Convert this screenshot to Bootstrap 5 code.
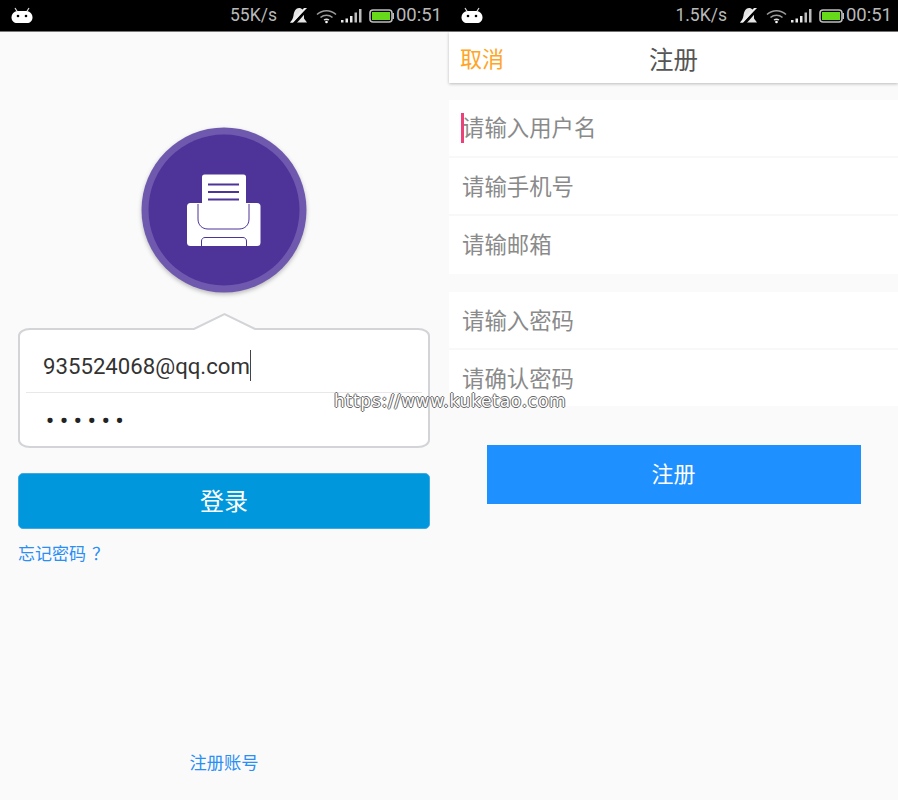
<!doctype html>
<html lang="zh">
<head>
<meta charset="utf-8">
<title>登录与注册</title>
<link rel="stylesheet" href="https://cdn.jsdelivr.net/npm/bootstrap@5.3.0/dist/css/bootstrap.min.css">
<style>
html,body{margin:0;height:800px;overflow:hidden;background:#fafafa}
body{font-family:"Roboto","Noto Sans CJK SC",sans-serif;position:relative}
.stage{width:898px;height:800px}
.phone{width:449px;height:800px;background:#fafafa}
.sbar{height:32px;background:#000;border-bottom:1px solid #777;color:#b9b9b9;padding:0 7px 0 11px;flex:none}
.sbar-right{padding:0 6px 0 12px}
.sbar .speed{font-size:17.5px;line-height:31px;margin-right:12px}
.sbar .clock{font-size:18.5px;line-height:31px;margin-left:2px}
.sico{display:block;flex:none}
.gap-batt{margin-left:7px}
.logo-wrap{padding:95px 0 0 141px;height:296px;flex:none;box-sizing:border-box}
.logo-svg{display:block;filter:drop-shadow(0 2px 2px rgba(0,0,0,.25))}
.login-box{position:relative;width:412px;height:120px;margin-left:18px;background:#fff;border:2px solid #d2d4d8;border-radius:12px/8px;padding:0 6px}
.notch{position:absolute;left:173px;top:-18px}
.login-row{height:63px;font-size:22.2px;line-height:72px;color:#333;padding-left:17px;border-bottom:1px solid #e8e8e8}
.login-row.pw{border:0;height:54px;line-height:56px;letter-spacing:6px;font-size:22px;font-weight:700;padding-left:20px;color:#222}
.caret-bar{display:inline-block;width:1px;height:31px;background:#444;vertical-align:-7px}
.login-btn{display:block;width:412px;height:56px;margin:25px 0 0 18px;background:#0097dd;border:1px solid #3fa9e3;border-radius:5px;color:#fff;font-size:24px;padding:1px 0 0;line-height:52px}
.forgot{display:block;margin:13px 0 0 18px;font-size:17px;line-height:24px;color:#2a8ef5;text-decoration:none}
.forgot span{margin-left:6px}
.signup-link{display:block;width:448px;margin-top:185px;text-align:center;font-size:17.3px;line-height:24px;color:#2a8ef5;text-decoration:none}
.navrow{height:51px;background:#fff;box-shadow:0 1px 3px rgba(0,0,0,.25);flex:none;position:relative;padding-left:11px}
.nav-cancel{font-size:22px;color:#ffa526;text-decoration:none;line-height:55px}
.nav-title{font-size:24.500px;color:#555;line-height:57px;left:0;right:0;top:0;position:absolute;text-align:center}
.field-list{margin-top:17px;border-radius:0}
.field-list + .field-list{margin-top:18px}
.field-item{height:58px;padding:0 0 0 13px;border:0;border-bottom:2px solid #f8f8f8;font-size:22.4px;line-height:58px;color:#8a8a8a;background:#fff;position:relative}
.field-item:first-child{line-height:57px}
.field-list + .field-list .field-item:first-child{line-height:58px}
.field-item:last-child{border-bottom:0}
.field-list + .field-list .field-item:last-child{height:56px}
.pink-caret{position:absolute;left:12px;top:13px;width:3px;height:30px;background:#ec407a}
.reg-btn{display:block;width:374px;height:59px;margin:39px 0 0 37.500px;background:#1e90ff;border:0;border-radius:0;color:#fff;font-size:22px;padding:0}
.watermark{position:absolute;left:334px;top:389px;font-family:"DejaVu Sans",sans-serif;font-size:17px;line-height:24px;color:#fff;letter-spacing:.75px;white-space:nowrap;text-shadow:1px 0 0 #666,-1px 0 0 #666,0 1px 0 #666,0 -1px 0 #666}
</style>
</head>
<body>
<div class="stage d-flex">
  <section class="phone d-flex flex-column">
    <div class="sbar d-flex align-items-center">
      <svg class="sico" width="22" height="18" viewBox="0 0 22 18"><path d="M4 1l2.500 4M18 1l-2.500 4" stroke="#ddd" stroke-width="1.200"/><path d="M7 4h8c4 0 6.500 3 6.500 6.500S19 16 16 16H6c-3 0-5.500-2-5.500-5.500S3 4 7 4z" fill="#fff"/><circle cx="7" cy="9" r="1.300" fill="#000"/><circle cx="15" cy="9" r="1.300" fill="#000"/></svg>
      <div class="flex-grow-1"></div>
      <span class="speed">55K/s</span>
      <svg class="sico me-2" width="19" height="18" viewBox="0 0 19 18"><path d="M10 1c3 0 5 2.500 5 5.500v5l3 4H1c2-2 3-4 3.500-7C5 4 7 1 10 1z" fill="#e4e4e4"/><path d="M4 18L19 1" stroke="#000" stroke-width="3"/><path d="M1 15.500L15 1h3L4 15.500z" fill="#efefef"/></svg>
      <svg class="sico" width="21" height="16" viewBox="0 0 21 16"><g fill="none" stroke="#9a9a9a" stroke-width="1.600"><path d="M1 6.500c5.500-5 13.500-5 19 0"/><path d="M4.500 9.500c3.500-3 8.500-3 12 0"/></g><path d="M8 12c1.500-1 3.500-1 5 0" stroke="#ddd" stroke-width="1.500" fill="none"/><circle cx="10.500" cy="14" r="1.300" fill="#fff"/></svg>
      <svg class="sico ms-1" width="21" height="15" viewBox="0 0 21 15"><g fill="#e8e8e8"><rect x="0" y="12" width="2.500" height="2.500"/><rect x="4.500" y="10.500" width="2.500" height="4"/><rect x="9" y="8" width="2.500" height="6.500"/></g><g fill="#bbb"><rect x="13.500" y="4.500" width="2.500" height="10"/><rect x="18" y="1" width="2.500" height="13.500"/></g></svg>
      <svg class="sico gap-batt" width="25" height="14" viewBox="0 0 25 14"><rect x="1" y="1" width="22" height="12" rx="3" fill="none" stroke="#bdbdbd" stroke-width="1.600"/><rect x="3" y="3" width="18" height="8" fill="#66d91a"/><rect x="23.500" y="4" width="1.500" height="6" fill="#bdbdbd"/></svg>
      <span class="clock">00:51</span>
    </div>
    <div class="logo-wrap">
      <svg class="logo-svg" width="166" height="166" viewBox="141 127 166 166">
        <circle cx="224" cy="210" r="82.500" fill="#6f59ae"/>
        <circle cx="224" cy="210" r="75.500" fill="#4e3399"/>
        <rect x="187" y="203" width="73.500" height="43" rx="3.500" fill="#fff"/>
        <path d="M198 204v15c0 6 4 10 10 10h31c6 0 10-4 10-10v-15" fill="none" stroke="#4e3399" stroke-width="1"/>
        <path d="M201.500 246v-5c0-2 1.500-3.500 3.500-3.500h38c2 0 3.500 1.500 3.500 3.500v5" fill="none" stroke="#4e3399" stroke-width="1"/>
        <rect x="202" y="174.500" width="44" height="36" rx="2.500" fill="#fff"/>
        <path d="M208 184.500h31M208 192h31M208 199.500h31" stroke="#4e3399" stroke-width="1.800"/>
      </svg>
    </div>
    <div class="login-box">
      <svg class="notch" width="64" height="20" viewBox="0 0 64 20"><path d="M1 16.500L31.500 1.500 62 16.500V20H1z" fill="#fff"/><path d="M0 17h1L31.500 2 62 17h1" fill="none" stroke="#d2d4d8" stroke-width="2"/></svg>
      <div class="login-row">935524068@qq.com<span class="caret-bar"></span></div>
      <div class="login-row pw">••••••</div>
    </div>
    <button type="button" class="btn login-btn">登录</button>
    <a class="forgot" href="#">忘记密码<span>？</span></a>
    <a class="signup-link" href="#">注册账号</a>
  </section>
  <section class="phone d-flex flex-column">
    <div class="sbar sbar-right d-flex align-items-center">
      <svg class="sico" width="22" height="18" viewBox="0 0 22 18"><path d="M4 1l2.500 4M18 1l-2.500 4" stroke="#ddd" stroke-width="1.200"/><path d="M7 4h8c4 0 6.500 3 6.500 6.500S19 16 16 16H6c-3 0-5.500-2-5.500-5.500S3 4 7 4z" fill="#fff"/><circle cx="7" cy="9" r="1.300" fill="#000"/><circle cx="15" cy="9" r="1.300" fill="#000"/></svg>
      <div class="flex-grow-1"></div>
      <span class="speed">1.5K/s</span>
      <svg class="sico me-2" width="19" height="18" viewBox="0 0 19 18"><path d="M10 1c3 0 5 2.500 5 5.500v5l3 4H1c2-2 3-4 3.500-7C5 4 7 1 10 1z" fill="#e4e4e4"/><path d="M4 18L19 1" stroke="#000" stroke-width="3"/><path d="M1 15.500L15 1h3L4 15.500z" fill="#efefef"/></svg>
      <svg class="sico" width="21" height="16" viewBox="0 0 21 16"><g fill="none" stroke="#9a9a9a" stroke-width="1.600"><path d="M1 6.500c5.500-5 13.500-5 19 0"/><path d="M4.500 9.500c3.500-3 8.500-3 12 0"/></g><path d="M8 12c1.500-1 3.500-1 5 0" stroke="#ddd" stroke-width="1.500" fill="none"/><circle cx="10.500" cy="14" r="1.300" fill="#fff"/></svg>
      <svg class="sico ms-1" width="21" height="15" viewBox="0 0 21 15"><g fill="#e8e8e8"><rect x="0" y="12" width="2.500" height="2.500"/><rect x="4.500" y="10.500" width="2.500" height="4"/><rect x="9" y="8" width="2.500" height="6.500"/></g><g fill="#bbb"><rect x="13.500" y="4.500" width="2.500" height="10"/><rect x="18" y="1" width="2.500" height="13.500"/></g></svg>
      <svg class="sico gap-batt" width="25" height="14" viewBox="0 0 25 14"><rect x="1" y="1" width="22" height="12" rx="3" fill="none" stroke="#bdbdbd" stroke-width="1.600"/><rect x="3" y="3" width="18" height="8" fill="#66d91a"/><rect x="23.500" y="4" width="1.500" height="6" fill="#bdbdbd"/></svg>
      <span class="clock">00:51</span>
    </div>
    <div class="navrow">
      <a class="nav-cancel" href="#">取消</a>
      <div class="nav-title">注册</div>
    </div>
    <div class="list-group field-list">
      <div class="list-group-item field-item"><span class="pink-caret"></span>请输入用户名</div>
      <div class="list-group-item field-item">请输手机号</div>
      <div class="list-group-item field-item">请输邮箱</div>
    </div>
    <div class="list-group field-list">
      <div class="list-group-item field-item">请输入密码</div>
      <div class="list-group-item field-item">请确认密码</div>
    </div>
    <button type="button" class="btn reg-btn">注册</button>
  </section>
</div>
<div class="watermark">https://www.kuketao.com</div>
<script src="https://cdn.jsdelivr.net/npm/bootstrap@5.3.0/dist/js/bootstrap.bundle.min.js"></script>
</body>
</html>
